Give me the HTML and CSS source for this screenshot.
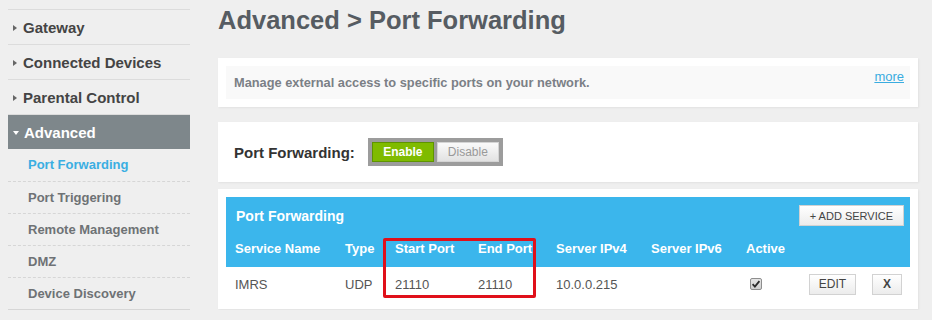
FILE: index.html
```html
<!DOCTYPE html>
<html lang="en">
<head>
  <meta charset="UTF-8">
  <title>Advanced &gt; Port Forwarding</title>
  <link rel="stylesheet" href="styles.css">
</head>
<body>
  <div class="layout">

    <!-- Left navigation -->
    <nav class="sidebar">
      <a class="nav-item"><span class="arrow"></span>Gateway</a>
      <a class="nav-item"><span class="arrow"></span>Connected Devices</a>
      <a class="nav-item"><span class="arrow"></span>Parental Control</a>
      <a class="nav-item open"><span class="arrow down"></span>Advanced</a>
      <ul class="sub-nav">
        <li class="active">Port Forwarding</li>
        <li>Port Triggering</li>
        <li>Remote Management</li>
        <li>DMZ</li>
        <li>Device Discovery</li>
      </ul>
    </nav>

    <!-- Main content -->
    <main class="content">
      <h1>Advanced &gt; Port Forwarding</h1>

      <div class="card intro">
        <div class="intro-box">
          <p>Manage external access to specific ports on your network.</p>
          <a class="more" href="#">more</a>
        </div>
      </div>

      <div class="card switch-card">
        <span class="switch-label">Port Forwarding:</span>
        <div class="toggle">
          <button class="toggle-btn on">Enable</button>
          <button class="toggle-btn off">Disable</button>
        </div>
      </div>

      <div class="card table-card">
        <div class="table-title">
          <span>Port Forwarding</span>
          <button class="btn">+ ADD SERVICE</button>
        </div>
        <table class="services">
          <colgroup>
            <col style="width:110px">
            <col style="width:50px">
            <col style="width:83px">
            <col style="width:78px">
            <col style="width:95px">
            <col style="width:95px">
            <col style="width:63px">
            <col style="width:63px">
            <col style="width:47px">
          </colgroup>
          <thead>
            <tr>
              <th>Service Name</th>
              <th>Type</th>
              <th>Start Port</th>
              <th>End Port</th>
              <th>Server IPv4</th>
              <th>Server IPv6</th>
              <th>Active</th>
              <th></th>
              <th></th>
            </tr>
          </thead>
          <tbody>
            <tr>
              <td>IMRS</td>
              <td>UDP</td>
              <td>21110</td>
              <td>21110</td>
              <td>10.0.0.215</td>
              <td></td>
              <td>
                <svg class="check" width="12" height="12" viewBox="0 0 12 12">
                  <defs>
                    <linearGradient id="cbg" x1="0" y1="0" x2="0" y2="1">
                      <stop offset="0" stop-color="#e6e6e6"/>
                      <stop offset="1" stop-color="#cfcfcf"/>
                    </linearGradient>
                  </defs>
                  <rect x="0.5" y="0.5" width="11" height="11" rx="1.5" fill="url(#cbg)" stroke="#8e8e8e"/>
                  <path d="M2.6 6.2 L4.9 8.6 L9.4 3.2" fill="none" stroke="#2b2b2b" stroke-width="1.8"/>
                </svg>
              </td>
              <td><button class="btn small">EDIT</button></td>
              <td><button class="btn small x">X</button></td>
            </tr>
          </tbody>
        </table>

        <!-- highlight annotation -->
        <div class="highlight"></div>
      </div>
    </main>

  </div>
</body>
</html>
```

FILE: styles.css
```css
/* Page */
html, body {
  margin: 0;
  padding: 0;
  background: #efefef;
  font-family: "Liberation Sans", Arial, sans-serif;
  color: #555;
}

.layout {
  display: flex;
  gap: 28px;
  padding: 0 14px 0 8px;
}

/******************************************************
 * SIDEBAR
 ******************************************************/
.sidebar {
  width: 182px;
  flex: none;
  margin-top: 9px;
  border-top: 1px solid #dcdcdc;
}
.nav-item {
  display: flex;
  align-items: center;
  height: 34px;
  padding-left: 5px;
  border-bottom: 1px solid #dcdcdc;
  font-size: 15px;
  font-weight: bold;
  color: #444;
  cursor: pointer;
}
.arrow {
  width: 0;
  height: 0;
  border-top: 3px solid transparent;
  border-bottom: 3px solid transparent;
  border-left: 4px solid #666;
  margin: 2px 6px 0 0;
}
.nav-item.open {
  background: #7e878b;
  color: #fff;
  border-bottom: none;
  height: 34px;
}
.arrow.down {
  border-left: 3px solid transparent;
  border-right: 3px solid transparent;
  border-top: 4px solid #fff;
  border-bottom: none;
  margin: 2px 5px 0 0;
}

.sub-nav {
  list-style: none;
  margin: 0;
  padding: 0;
}
.sub-nav li {
  height: 31px;
  line-height: 31px;
  padding-left: 20px;
  border-bottom: 1px dashed #d6d6d6;
  font-size: 13px;
  font-weight: bold;
  color: #6e7275;
}
.sub-nav li:first-child {
  height: 32px;
  line-height: 31px;
}
.sub-nav li:last-child {
  border-bottom: 1px solid #d6d6d6;
}
.sub-nav li.active {
  color: #3aaee2;
}

/******************************************************
 * MAIN
 ******************************************************/
.content {
  flex: 1;
  padding-top: 5px;
}
h1 {
  margin: 0;
  font-size: 25.5px;
  line-height: 30px;
  color: #565c62;
}

.card {
  background: #fff;
  box-shadow: 1px 1px 2px rgba(0, 0, 0, 0.06);
}

/* Intro card */
.intro {
  margin-top: 23px;
  padding: 8px;
}
.intro-box {
  display: flex;
  justify-content: space-between;
  height: 33px;
  padding: 0 6px 0 8px;
  background: #f9f9f9;
}
.intro-box p {
  margin: 0;
  align-self: center;
  font-size: 12.8px;
  font-weight: bold;
  color: #7b8086;
}
.more {
  margin-top: 3px;
  font-size: 13px;
  color: #3aace0;
}

/* Enable / disable card */
.switch-card {
  display: flex;
  align-items: center;
  margin-top: 15px;
  padding: 16px;
  height: 28px;
}
.switch-label {
  font-size: 15px;
  font-weight: bold;
  color: #333;
  margin-right: 13px;
}
.toggle {
  display: flex;
  gap: 3px;
  padding: 4px;
  background: #9c9c9c;
}
.toggle-btn {
  width: 62px;
  height: 20px;
  padding: 0;
  font-family: inherit;
  font-size: 12px;
  border: 1px solid;
}
.toggle-btn.on {
  background: #7fbb00;
  border-color: #5e9400;
  color: #fff;
  font-weight: bold;
}
.toggle-btn.off {
  background: linear-gradient(#fafafa, #e2e2e2);
  border-color: #d4d4d4;
  color: #999;
}

/* Table card */
.table-card {
  position: relative;
  margin-top: 7px;
  padding: 8px;
}
.table-title {
  display: flex;
  justify-content: space-between;
  align-items: center;
  height: 21px;
  padding: 8px 6px 6px 10px;
  background: #3bb6ec;
  color: #fff;
  font-size: 14px;
  font-weight: bold;
}
.btn {
  font-family: inherit;
  font-size: 12px;
  color: #444;
  background: linear-gradient(#ffffff, #ececec);
  border: 1px solid #d2d2d2;
  cursor: pointer;
}
.table-title .btn {
  height: 21px;
  padding: 0 10px;
  font-size: 11px;
}
.btn.small {
  height: 21px;
  width: 47px;
  padding: 0;
}
.btn.x {
  width: 30px;
  font-weight: bold;
}

.services {
  width: 684px;
  table-layout: fixed;
  border-collapse: collapse;
}
.services th {
  height: 33px;
  padding: 0 0 2px 9px;
  text-align: left;
  background: #3bb6ec;
  color: #fff;
  font-size: 13px;
  font-weight: bold;
}
.services td {
  height: 34px;
  padding: 0 0 0 9px;
  font-size: 13px;
  color: #555;
}
.check {
  display: block;
  margin-left: 4px;
}

/* Red annotation box round the port columns */
.highlight {
  position: absolute;
  left: 165px;
  top: 49px;
  width: 153px;
  height: 60px;
  box-sizing: border-box;
  border: 3px solid #e0101a;
  border-radius: 2px;
}
```
